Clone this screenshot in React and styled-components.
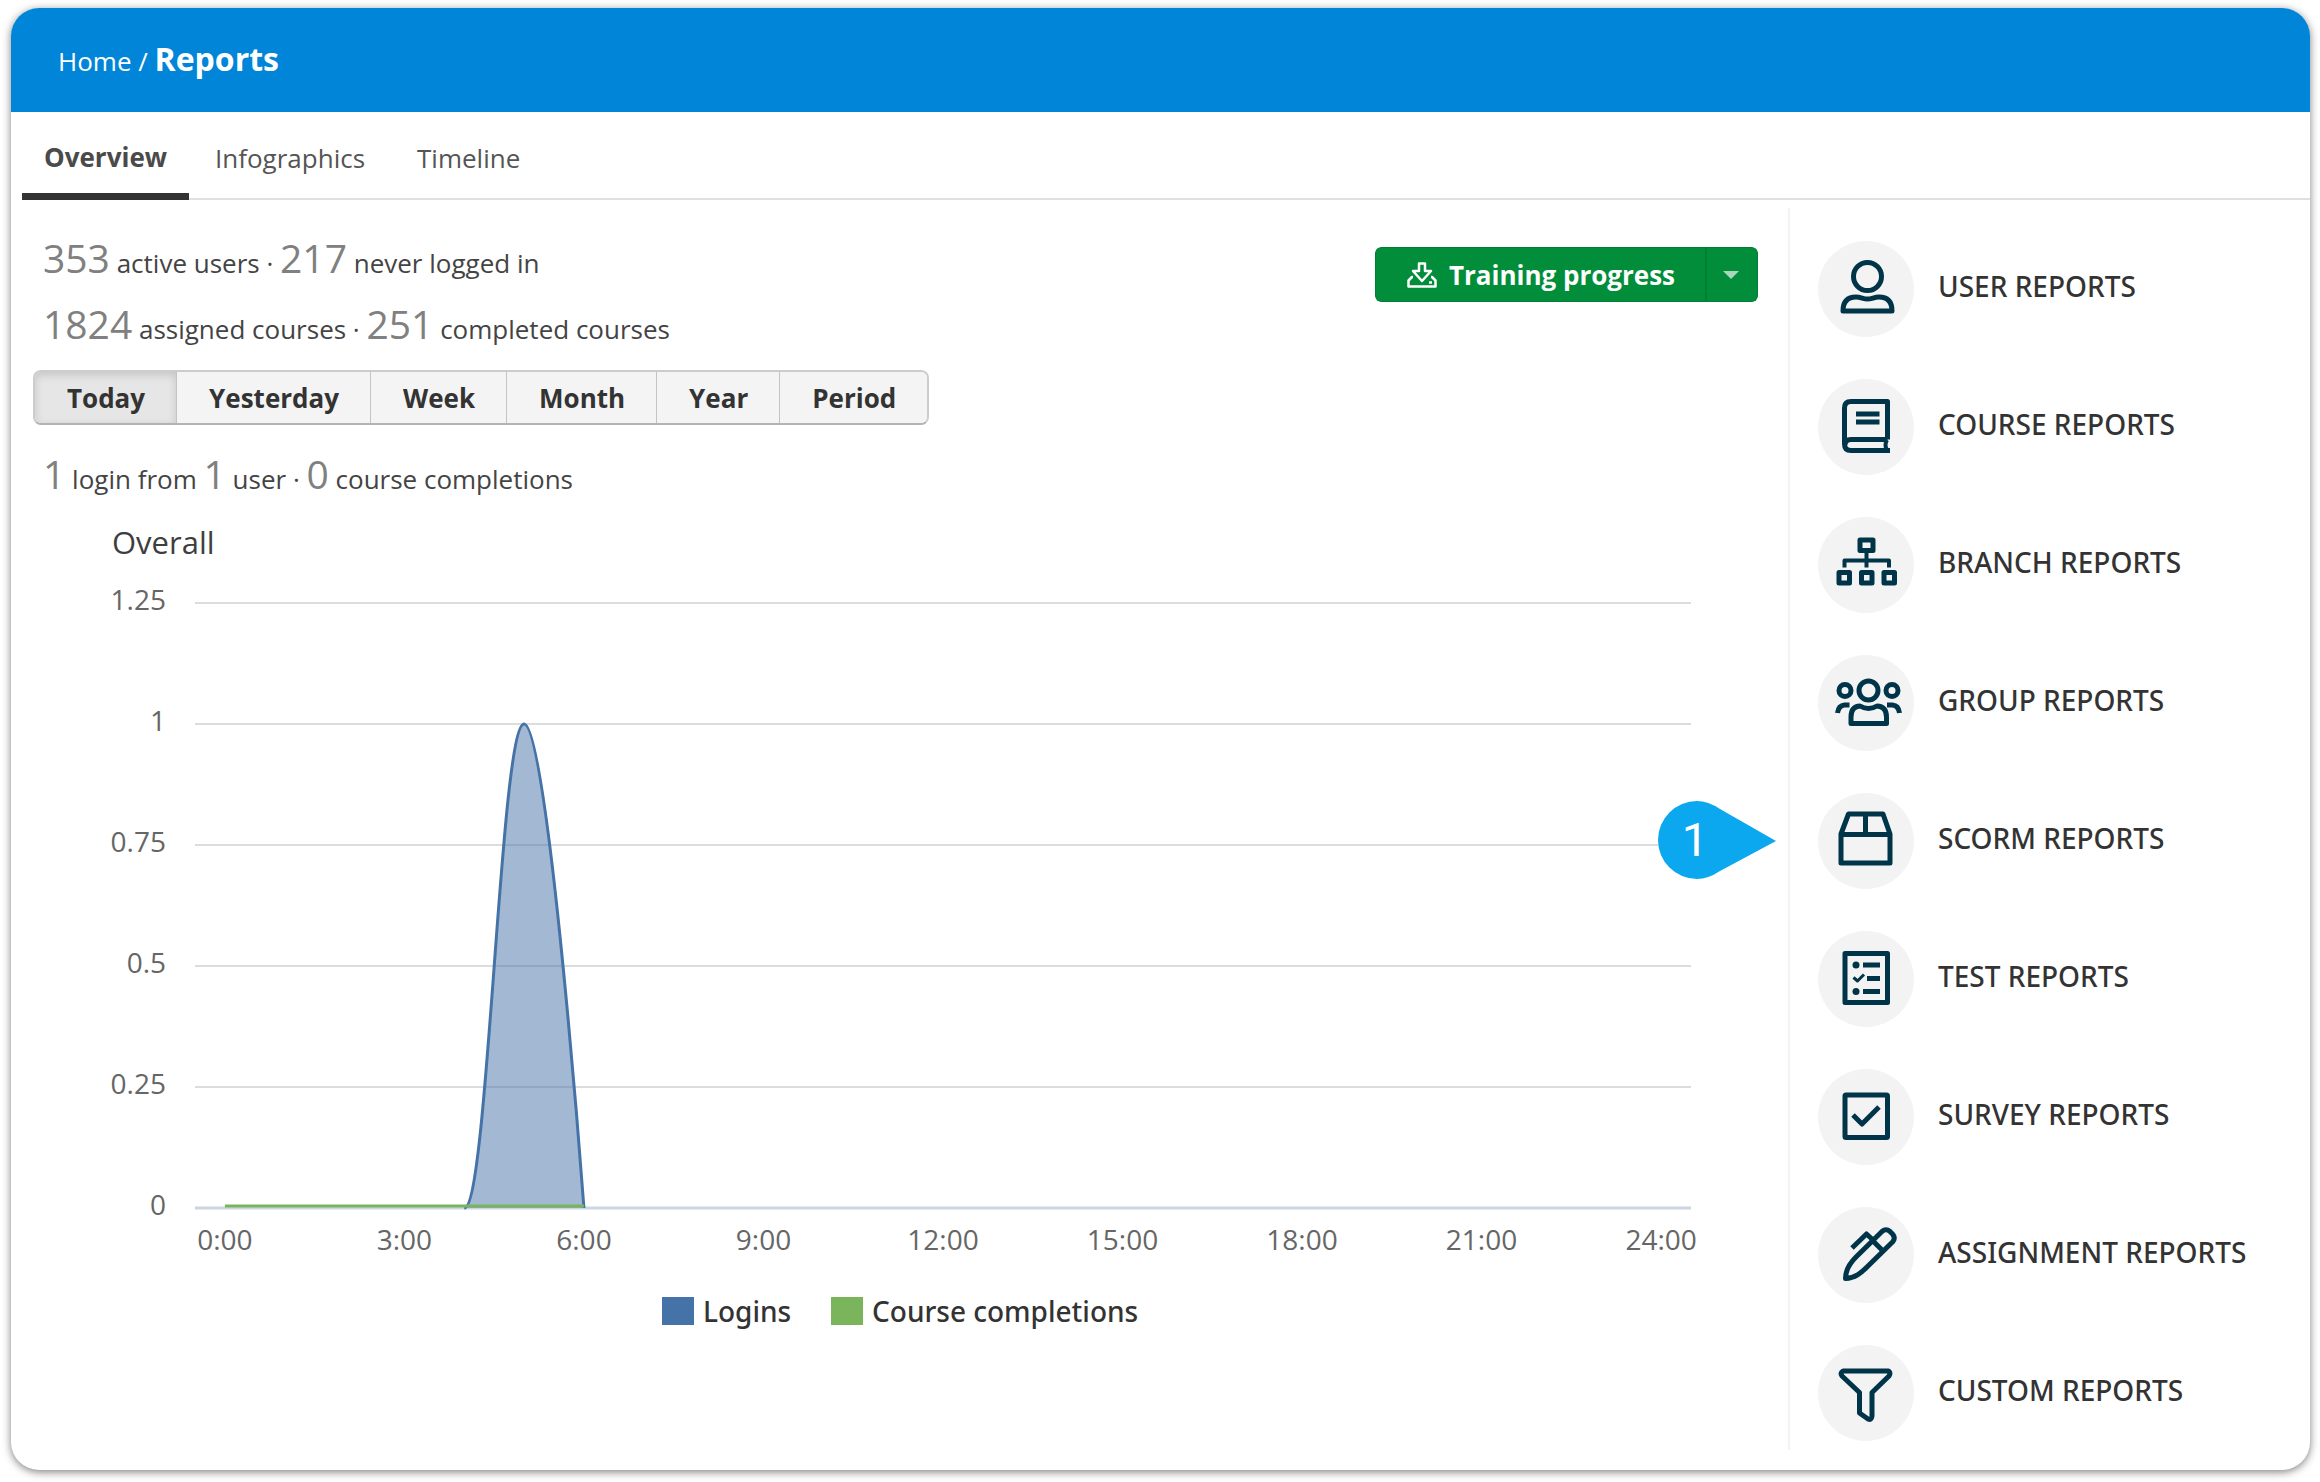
import { useState } from "react";
import styled, { createGlobalStyle } from "styled-components";

const GlobalStyle = createGlobalStyle`
  * {
    box-sizing: border-box;
  }
  body {
    margin: 0;
    background: #fff;
    color: #444;
    font-family: "Open Sans", "Liberation Sans", sans-serif;
    font-size: 26px;
  }
  button {
    font-family: inherit;
    cursor: pointer;
  }
`;

const Page = styled.div`
  min-height: 100vh;
  padding: 8px 10px 12px 11px;
  display: flex;
`;

const Card = styled.div`
  flex: 1;
  display: flex;
  flex-direction: column;
  border-radius: 28px;
  background: #fff;
  box-shadow: 0 2px 8px rgba(0, 0, 0, 0.5);
`;

const Header = styled.header`
  display: flex;
  align-items: center;
  height: 104px;
  padding-left: 47px;
  border-radius: 28px 28px 0 0;
  background: #0085d8;
  color: #fff;
`;

const Breadcrumb = styled.nav`
  line-height: 40px;
`;

const HomeLink = styled.a`
  color: #fff;
  text-decoration: none;
`;

const Current = styled.strong`
  font-size: 32px;
  font-weight: 700;
`;

const Tabs = styled.nav`
  display: flex;
  height: 88px;
  margin-left: 11px;
  border-bottom: 2px solid #e0e0e0;
`;

const Tab = styled.a`
  height: 88px;
  padding: ${(props) => (props.$active ? "25px 22px 0" : "26px 26px 0")};
  border-bottom: 7px solid ${(props) => (props.$active ? "#333" : "transparent")};
  color: ${(props) => (props.$active ? "#4a4a4a" : "#555")};
  font-weight: ${(props) => (props.$active ? 700 : 400)};
  line-height: 40px;
  text-decoration: none;
`;

const Body = styled.div`
  flex: 1;
  display: flex;
  padding: 8px 0 20px;
`;

const Main = styled.main`
  flex: 1;
  padding: 22px 30px 0 22px;
`;

const Summary = styled.div`
  display: flex;
  justify-content: space-between;
  align-items: flex-start;
`;

const Stats = styled.p`
  margin: 0;
  padding-left: 10px;
  line-height: 66px;
`;

const Num = styled.span`
  color: #808080;
  font-size: 39px;
  line-height: 40px;
`;

const SplitButton = styled.div`
  display: flex;
  height: 55px;
  margin-top: 17px;
  border-radius: 6px;
  overflow: hidden;
`;

const GreenButton = styled.button`
  display: flex;
  align-items: center;
  gap: 12px;
  padding: 0 30px 0 31px;
  border: 1px solid #007f33;
  border-right-width: 2px;
  border-radius: 6px 0 0 6px;
  background: #028d3b;
  color: #fff;
  font-size: 26px;
  font-weight: 700;
`;

const CaretButton = styled(GreenButton)`
  width: 51px;
  padding: 0 0 0 16px;
  border-left: none;
  border-right-width: 1px;
  border-radius: 0 6px 6px 0;
`;

const Periods = styled.div`
  display: flex;
  width: fit-content;
  height: 55px;
  margin: 8px 0 21px;
  border: 2px solid #ccc;
  border-bottom-color: #b3b3b3;
  border-radius: 8px;
  overflow: hidden;
`;

const PeriodButton = styled.button`
  padding: 0 31px 0 32px;
  border: none;
  border-right: 1px solid #c4c4c4;
  background: ${(props) => (props.$active ? "#e6e6e6" : "#f4f4f4")};
  box-shadow: ${(props) => (props.$active ? "inset 0 3px 8px rgba(0, 0, 0, 0.15)" : "none")};
  color: #333;
  font-size: 26px;
  font-weight: 700;
  &:last-child {
    border-right: none;
  }
`;

const Chart = styled.svg`
  display: block;
  width: 100%;
  font-size: 28px;
`;

const ChartTitle = styled.text`
  font-size: 31px;
`;

const LegendText = styled.text`
  font-family: "Noto Sans", sans-serif;
  font-weight: 500;
`;

const Sidebar = styled.aside`
  width: 522px;
  padding: 33px 0 0 28px;
  border-left: 2px solid #f3f3f3;
`;

const ReportList = styled.ul`
  display: flex;
  flex-direction: column;
  gap: 42px;
  margin: 0;
  padding: 0;
  list-style: none;
`;

const ReportItem = styled.li`
  position: relative;
`;

const ReportLink = styled.a`
  display: flex;
  align-items: center;
  gap: 24px;
  color: #333;
  text-decoration: none;
`;

const ReportLabel = styled.span`
  padding-bottom: 6px;
  font-family: "Noto Sans", sans-serif;
  font-size: 28px;
  font-weight: 500;
`;

const IconCircle = styled.span`
  display: flex;
  justify-content: center;
  align-items: center;
  width: 96px;
  height: 96px;
  border-radius: 50%;
  background: #f3f3f3;
`;

const Marker = styled.svg`
  position: absolute;
  top: 8px;
  left: -160px;
`;

const periods = ["Today", "Yesterday", "Week", "Month", "Year", "Period"];

const reports = [
  {
    label: "USER REPORTS",
    icon: (
      <>
        <circle cx="34.5" cy="19.5" r="14" />
        <path d="M10 54 C10 44 15 40 23 40 C28 40 30 42 34.5 42 C39 42 41 40 46 40 C54 40 59 44 59 54 Z" />
      </>
    ),
  },
  {
    label: "COURSE REPORTS",
    icon: (
      <>
        <path d="M54.5 44.5 V6.5 H18 Q11.5 6.5 11.5 13 V49 Q11.5 55.5 18 55.5 H57 M12 50 Q12 44.5 18 44.5 H54.5" />
        <path d="M54 45 Q51 50 54 55" strokeWidth="4" />
        <path d="M23 19 H46.5 M23 27 H46.5" />
      </>
    ),
  },
  {
    label: "BRANCH REPORTS",
    icon: (
      <>
        <rect x="27" y="7" width="13" height="10.5" />
        <rect x="6" y="39.5" width="10.5" height="10.5" />
        <rect x="28.5" y="39.5" width="10.5" height="10.5" />
        <rect x="51" y="39.5" width="10.5" height="10.5" />
        <path d="M33.5 18 V34.5 M11.5 34.5 V27.5 H56 V34.5" strokeWidth="4" />
      </>
    ),
  },
  {
    label: "GROUP REPORTS",
    icon: (
      <>
        <circle cx="35.5" cy="19.5" r="9.5" />
        <circle cx="12" cy="19.5" r="6" />
        <circle cx="59" cy="19.5" r="6" />
        <path d="M18 52.5 V46 Q18 35.5 27 35 Q31 37.5 35.5 37.5 Q40 37.5 44 35 Q53.5 35.5 53.5 46 V52.5 Z" />
        <path d="M4.5 42 Q5.5 34.5 11.5 34 H16.5 M54 34 H59.5 Q65.5 34.5 66.5 42" />
      </>
    ),
  },
  {
    label: "SCORM REPORTS",
    icon: (
      <path d="M15.5 5 H50 L57 25 V54 H8 V25 Z M8 25.5 H57 M32.5 5 V25" />
    ),
  },
  {
    label: "TEST REPORTS",
    icon: (
      <>
        <rect x="12" y="6.5" width="42.5" height="49" />
        <path d="M30 18 H47 M34 31.5 H47 M30 44.5 H47" />
        <path d="M20.5 30.5 L24.5 34 L31 27.5" strokeWidth="3" />
        <circle cx="23" cy="18" r="3.5" fill="#003549" stroke="none" />
        <circle cx="23" cy="44.5" r="3.5" fill="#003549" stroke="none" />
      </>
    ),
  },
  {
    label: "SURVEY REPORTS",
    icon: (
      <>
        <rect x="12" y="10" width="42.5" height="42.5" rx="1" />
        <path d="M20 30 L29 39 L46 22" />
      </>
    ),
  },
  {
    label: "ASSIGNMENT REPORTS",
    icon: (
      <path d="M12.5 55.5 C12.5 46 17 40 23 34 L49 8.5 Q53 5 57 8.5 L59.5 11 Q63 15 59.5 19 L34 44 C28 50 22 55 12.5 55.5 Z M40 18 L50 28 M19 25 L33.5 11 L40 17" />
    ),
  },
  {
    label: "CUSTOM REPORTS",
    icon: (
      <path d="M10 10 H55.5 Q58 12 56 15 L39 31.5 V55 Q38.5 59.5 35 58 L26.5 52 V31.5 L9 15 Q7 12 10 10 Z" />
    ),
  },
];

const yTicks = ["1.25", "1", "0.75", "0.5", "0.25", "0"];
const xTicks = ["0:00", "3:00", "6:00", "9:00", "12:00", "15:00", "18:00", "21:00", "24:00"];

// plot area: 25 hourly columns, grid lines STEP apart
const WIDTH = 1496;
const HOUR = WIDTH / 25;
const STEP = 121;
const LEFT = 162;
const TOP = 91;
const BASE = TOP + STEP * 5;

const hourX = (hour) => LEFT + (hour + 0.5) * HOUR;
const valueY = (value) => BASE - value * STEP * 4;

const loginLine =
  `C${hourX(4.4)} ${BASE} ${hourX(4.6)} ${valueY(1)} ${hourX(5)} ${valueY(1)}` +
  `C${hourX(5.4)} ${valueY(1)} ${hourX(6)} ${BASE} ${hourX(6)} ${BASE}`;

const LoginChart = () => (
  <Chart viewBox="0 0 1725 852" role="img" aria-label="Overall logins and course completions">
    <ChartTitle x="79" y="42" fill="#3e3e3e">Overall</ChartTitle>
    {yTicks.map((tick, i) => (
      <g key={tick}>
        <line
          x1={LEFT}
          x2={LEFT + WIDTH}
          y1={TOP + i * STEP}
          y2={TOP + i * STEP}
          stroke={tick === "0" ? "#ccd6e3" : "#dcdcdc"}
          strokeWidth={tick === "0" ? 3 : 2}
        />
        <text x="133" y={TOP + i * STEP + 7} textAnchor="end" fill="#666">{tick}</text>
      </g>
    ))}
    {xTicks.map((tick, i) => (
      <text key={tick} x={hourX(i * 3)} y={BASE + 42} textAnchor="middle" fill="#666">{tick}</text>
    ))}
    <path d={`M${hourX(4)} ${BASE} ${loginLine} Z`} fill="#4572a7" fillOpacity="0.5" />
    <path d={`M${hourX(4)} ${BASE} ${loginLine}`} fill="none" stroke="#4572a7" strokeWidth="3" />
    <line x1={hourX(0)} x2={hourX(6)} y1={BASE - 2} y2={BASE - 2} stroke="#7ab55c" strokeWidth="3" />
    <rect x="629" y="785" width="32" height="28" fill="#4572a7" />
    <LegendText x="670" y="810" fill="#333">Logins</LegendText>
    <rect x="798" y="785" width="32" height="28" fill="#7ab55c" />
    <LegendText x="839" y="810" fill="#333">Course completions</LegendText>
  </Chart>
);

export default function App() {
  const [period, setPeriod] = useState("Today");

  return (
    <>
      <GlobalStyle />
      <Page>
        <Card>
          <Header>
            <Breadcrumb>
              <HomeLink href="#home">Home</HomeLink> / <Current>Reports</Current>
            </Breadcrumb>
          </Header>
          <Tabs>
            <Tab href="#overview" $active>Overview</Tab>
            <Tab href="#infographics">Infographics</Tab>
            <Tab href="#timeline">Timeline</Tab>
          </Tabs>
          <Body>
            <Main>
              <Summary>
                <div>
                  <Stats>
                    <Num>353</Num> active users · <Num>217</Num> never logged in
                  </Stats>
                  <Stats>
                    <Num>1824</Num> assigned courses · <Num>251</Num> completed courses
                  </Stats>
                </div>
                <SplitButton>
                  <GreenButton type="button">
                    <svg width="30" height="26" viewBox="0 0 30 26" fill="none" stroke="#fff" strokeWidth="2.5" strokeLinejoin="round">
                      <path d="M12 1.5 H18 V9 H24 L15 19 L6 9 H12 Z" />
                      <path d="M6 15 H5 L1.5 18.5 V24.5 H28.5 V18.5 L25 15 H24 M22 20.5 H25" />
                    </svg>
                    Training progress
                  </GreenButton>
                  <CaretButton type="button" aria-label="More exports">
                    <svg width="16" height="8" viewBox="0 0 16 8">
                      <path d="M0 0 H16 L8 8 Z" fill="#aad6bc" />
                    </svg>
                  </CaretButton>
                </SplitButton>
              </Summary>
              <Periods>
                {periods.map((item) => (
                  <PeriodButton
                    key={item}
                    type="button"
                    $active={item === period}
                    onClick={() => setPeriod(item)}
                  >
                    {item}
                  </PeriodButton>
                ))}
              </Periods>
              <Stats>
                <Num>1</Num> login from <Num>1</Num> user · <Num>0</Num> course completions
              </Stats>
              <LoginChart />
            </Main>
            <Sidebar>
              <ReportList>
                {reports.map((report) => (
                  <ReportItem key={report.label}>
                    {report.label === "SCORM REPORTS" && (
                      <Marker width="120" height="78" viewBox="0 0 120 78">
                        <path d="M39 0 A39 39 0 1 0 39 78 Q50 78 62 70 L118 40 L62 8 Q50 0 39 0 Z" fill="#0ba7ef" />
                        <text x="37" y="55" textAnchor="middle" fill="#fff" fontFamily="Roboto" fontSize="47">1</text>
                      </Marker>
                    )}
                    <ReportLink href="#reports">
                      <IconCircle>
                        <svg width="72" height="64" viewBox="-3 0 72 64" fill="none" stroke="#003549" strokeWidth="5" strokeLinejoin="round">
                          {report.icon}
                        </svg>
                      </IconCircle>
                      <ReportLabel>{report.label}</ReportLabel>
                    </ReportLink>
                  </ReportItem>
                ))}
              </ReportList>
            </Sidebar>
          </Body>
        </Card>
      </Page>
    </>
  );
}
